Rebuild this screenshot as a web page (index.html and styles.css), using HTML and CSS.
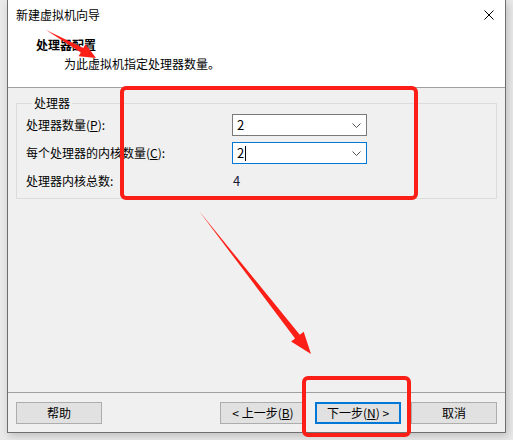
FILE: index.html
```html
<!DOCTYPE html>
<html lang="zh-CN">
<head>
<meta charset="utf-8">
<title>新建虚拟机向导</title>
<link rel="stylesheet" href="styles.css">
</head>
<body>
<div class="window">
  <div class="titlebar">
    <span class="title">新建虚拟机向导</span>
    <svg class="close" width="10" height="10" viewBox="0 0 10 10"><path d="M0.5 0.5 L9.5 9.5 M9.5 0.5 L0.5 9.5" stroke="#000" stroke-width="1"/></svg>
  </div>
  <div class="header">
    <div class="h-title">处理器配置</div>
    <div class="h-sub">为此虚拟机指定处理器数量。</div>
  </div>
  <div class="content">
    <fieldset class="group">
      <legend>处理器</legend>
      <div class="grid">
        <div class="lbl">处理器数量(<u>P</u>):</div>
        <div class="combo"><span>2</span><svg class="chev" width="9" height="5" viewBox="0 0 9 5"><path d="M0.5 0.5 L4.5 4.5 L8.5 0.5" fill="none" stroke="#555" stroke-width="1"/></svg></div>
        <div class="lbl">每个处理器的内核数量(<u>C</u>):</div>
        <div class="combo focus"><span>2<i class="caret"></i></span><svg class="chev" width="9" height="5" viewBox="0 0 9 5"><path d="M0.5 0.5 L4.5 4.5 L8.5 0.5" fill="none" stroke="#555" stroke-width="1"/></svg></div>
        <div class="lbl total">处理器内核总数:</div>
        <div class="val total">4</div>
      </div>
    </fieldset>
  </div>
  <div class="footer">
    <button class="btn">帮助</button>
    <div class="spacer"></div>
    <button class="btn">&lt; 上一步(<u>B</u>)</button>
    <button class="btn primary">下一步(<u>N</u>) &gt;</button>
    <button class="btn">取消</button>
  </div>
</div>
<svg class="overlay" width="513" height="440" viewBox="0 0 513 440">
  <rect x="122" y="88" width="294" height="110" rx="4" fill="none" stroke="#fb1f17" stroke-width="4"/>
  <rect x="304" y="378" width="105" height="57" rx="4" fill="none" stroke="#fb1f17" stroke-width="4"/>
  <polygon points="46,30 83.3,48 85.5,44.1 96,58 78.6,56.3 80.8,52.4" fill="#fb1f17"/>
  <polygon points="199,211 299.8,334.8 303.7,331.8 311,354 291.1,341.6 295.1,338.5" fill="#fb1f17"/>
</svg>
</body>
</html>
```
FILE: styles.css
```css
* { box-sizing: border-box; }
html, body { margin: 0; padding: 0; }
body {
  width: 513px;
  height: 440px;
  overflow: hidden;
  background: #e9e9e9;
  font-family: "Noto Sans CJK SC", "Noto Sans", sans-serif;
  font-size: 12px;
  color: #000;
  position: relative;
}
.window {
  margin-left: 7px;
  width: 499px;
  height: 433px;
  border: 1px solid #6f6f6f;
  border-top: none;
  background: #f0f0f0;
  display: flex;
  flex-direction: column;
  box-shadow: 2px 3px 8px rgba(0,0,0,0.18);
}
.titlebar {
  height: 30px;
  background: #fff;
  display: flex;
  align-items: center;
  padding-left: 8px;
  padding-right: 11px;
}
.title { flex: 1; line-height: 16px; }
.close { display: block; }
.header {
  height: 58px;
  background: #fff;
  border-bottom: 1px solid #a0a0a0;
  padding-left: 28px;
  padding-top: 6px;
}
.h-title { font-weight: bold; line-height: 18px; }
.h-sub { padding-left: 28px; line-height: 18px; margin-top: 1px; }
.content {
  flex: 1;
  padding: 7px 8px 0 8px;
}
.group {
  margin: 0;
  border: 1px solid #dcdcdc;
  padding: 3px 8px 10px 9px;
  height: 104px;
}
.group legend {
  padding: 0 2px;
  margin-left: 6px;
  line-height: 16px;
}
.grid {
  display: grid;
  grid-template-columns: 206px 135px;
  row-gap: 6px;
  align-items: center;
}
.lbl { line-height: 16px; }
.combo {
  height: 22px;
  border: 1px solid #7a7a7a;
  background: #fff;
  display: flex;
  align-items: center;
  justify-content: space-between;
  padding: 0 5px 0 4px;
  font-size: 13px;
}
.combo.focus { border-color: #0078d7; }
.combo span { display: flex; align-items: center; line-height: 16px; }
.caret {
  display: inline-block;
  width: 1px;
  height: 15px;
  background: #000;
  margin-left: 1px;
}
.total { margin-top: 1px; }
.val { padding-left: 1px; color: #1a1a40; font-size: 13px; }
.footer {
  height: 40px;
  border-top: 1px solid #a0a0a0;
  display: flex;
  align-items: flex-start;
  padding: 9px 8px 0 8px;
  gap: 0;
}
.spacer { flex: 1; }
.btn {
  height: 22px;
  width: 86px;
  margin: 0;
  padding: 0;
  border: 1px solid #adadad;
  background: #e1e1e1;
  font-family: inherit;
  font-size: 12px;
  color: #000;
  line-height: 18px;
}
.btn + .btn { margin-left: 10px; }
.btn.primary { border: 2px solid #0078d7; margin-left: 9px; }
.btn.primary + .btn { margin-left: 10px; }
.overlay { position: absolute; left: 0; top: 0; pointer-events: none; }
```
